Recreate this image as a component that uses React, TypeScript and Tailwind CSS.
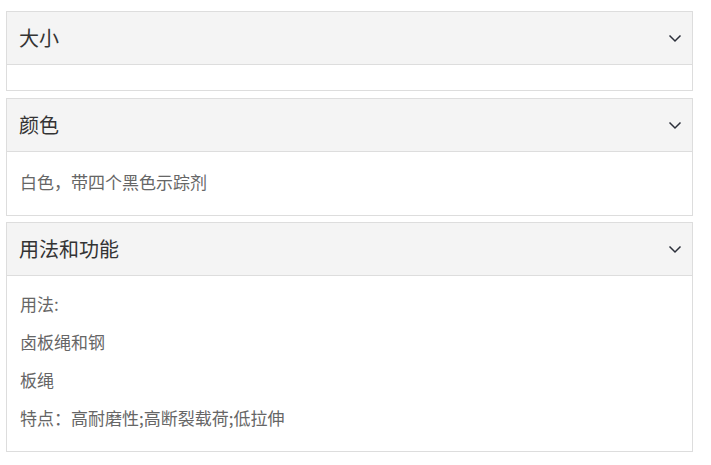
const font = { fontFamily: '"Noto Sans CJK SC", "Noto Sans", sans-serif' };

function Chevron() {
  return (
    <svg width="14" height="9" viewBox="0 0 14 9" fill="none" aria-hidden="true">
      <path d="M1.5 1.5 7 7l5.5-5.5" stroke="#2b2f3a" strokeWidth="1.5" />
    </svg>
  );
}

interface PanelProps {
  title: string;
  body: string[];
  bodyClass: string;
  className?: string;
}

const Panel = ({ title, body, bodyClass, className = '' }: PanelProps) => (
  <section className={`border border-[#dddddd] bg-white ${className}`}>
    <div className="flex h-[53px] items-center justify-between border-b border-[#dddddd] bg-[#f4f4f4] pl-[12px] pr-[10px]">
      <h3 className="text-[20px] leading-[28px] text-[#333333]">{title}</h3>
      <Chevron />
    </div>
    <div className={`px-[13px] text-[17px] leading-[28px] text-[#666666] ${bodyClass}`}>
      {body.map((line, i) => (
        <p key={i} className={i > 0 ? 'mt-[10px]' : ''}>
          {line}
        </p>
      ))}
    </div>
  </section>
);

export default function App() {
  return (
    <div className="min-h-[465px] bg-white pt-[11px] pl-[6px]" style={font}>
      <div className="w-[687px]">
        <Panel title="大小" body={[]} bodyClass="h-[25px]" className="mb-[7px]" />
        <Panel title="颜色" body={['白色，带四个黑色示踪剂']} bodyClass="pt-[16px] pb-[19px]" className="mb-[6px]" />
        <Panel
          title="用法和功能"
          body={['用法:', '卤板绳和钢', '板绳', '特点：高耐磨性;高断裂载荷;低拉伸']}
          bodyClass="pt-[14px] pb-[19px]"
        />
      </div>
    </div>
  );
}
